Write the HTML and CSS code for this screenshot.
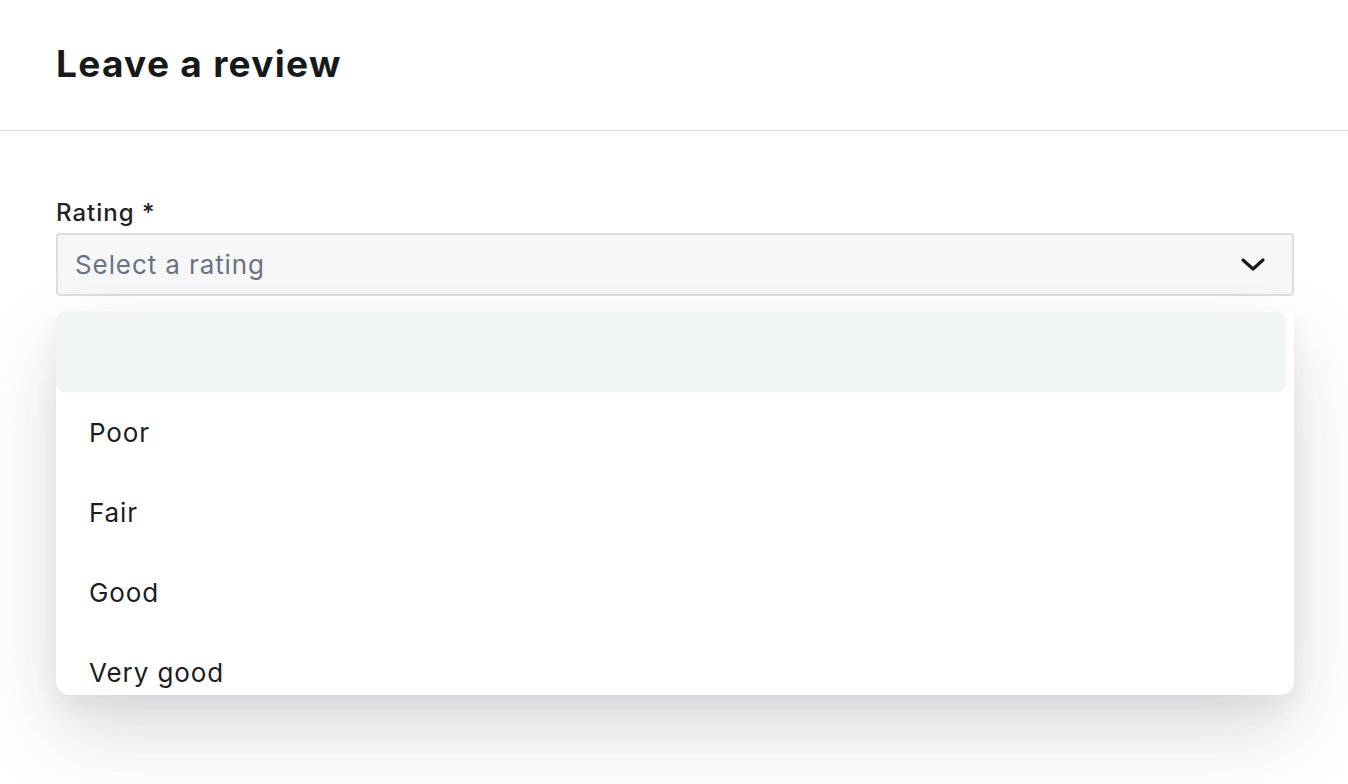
FILE: index.html
```html
<!DOCTYPE html>
<html lang="en">
<head>
<meta charset="utf-8">
<title>Leave a review</title>
<link rel="stylesheet" href="styles.css">
</head>
<body>
<header class="header">
  <h1 class="title">Leave a review</h1>
</header>
<main class="content">
  <div class="field">
    <label class="label">Rating *</label>
    <div class="select">
      <span class="placeholder">Select a rating</span>
      <svg class="chevron" width="26" height="16" viewBox="0 0 26 16"><path d="M3 3 L13 12 L23 3" fill="none" stroke="#1a1a1a" stroke-width="3.2" stroke-linecap="round" stroke-linejoin="round"/></svg>
    </div>
    <div class="listbox">
      <ul class="options">
        <li class="option option-active"></li>
        <li class="option">Poor</li>
        <li class="option">Fair</li>
        <li class="option">Good</li>
        <li class="option">Very good</li>
      </ul>
    </div>
  </div>
</main>
</body>
</html>
```
FILE: styles.css
```css
* { box-sizing: border-box; }
html, body { margin: 0; padding: 0; background: #ffffff; }
body {
  font-family: Inter, "Noto Sans", sans-serif;
  color: #1a1a1a;
  width: 1348px;
  height: 784px;
  overflow: hidden;
}
.header {
  height: 131px;
  border-bottom: 1px solid #dedfe1;
  padding: 38px 56px 0;
}
.title {
  margin: 0;
  font-size: 37px;
  font-weight: 700;
  line-height: 52px;
  letter-spacing: 1.3px;
  color: #18191b;
}
.content {
  padding: 67px 54px 0 56px;
}
.field {
  position: relative;
}
.label {
  display: block;
  font-size: 24px;
  line-height: 30px;
  margin-bottom: 5px;
  font-weight: 500;
  letter-spacing: 1px;
  color: #222325;
}
.select {
  height: 63px;
  background: #f6f7f9;
  border: 2px solid #dcdee1;
  border-radius: 4px;
  display: flex;
  align-items: center;
  justify-content: space-between;
  padding: 0 26px 0 17px;
}
.placeholder {
  font-size: 26px;
  letter-spacing: 0.9px;
  color: #6a7384;
}
.chevron { display: block; }
.listbox {
  position: absolute;
  left: 0;
  right: 0;
  top: 114px;
  height: 383px;
  background: #ffffff;
  border-radius: 0 0 14px 14px;
  box-shadow: 0 36px 80px rgba(40, 48, 60, 0.17), 0 12px 24px rgba(40, 48, 60, 0.06);
  overflow: hidden;
  padding-right: 8px;
}
.options {
  list-style: none;
  margin: 0;
  padding: 0;
}
.option {
  height: 80px;
  display: flex;
  align-items: center;
  padding-left: 33px;
  font-size: 26px;
  letter-spacing: 0.9px;
  color: #1c1d1f;
}
.option-active {
  background: #f2f6f2;
  border-radius: 8px;
}
```
